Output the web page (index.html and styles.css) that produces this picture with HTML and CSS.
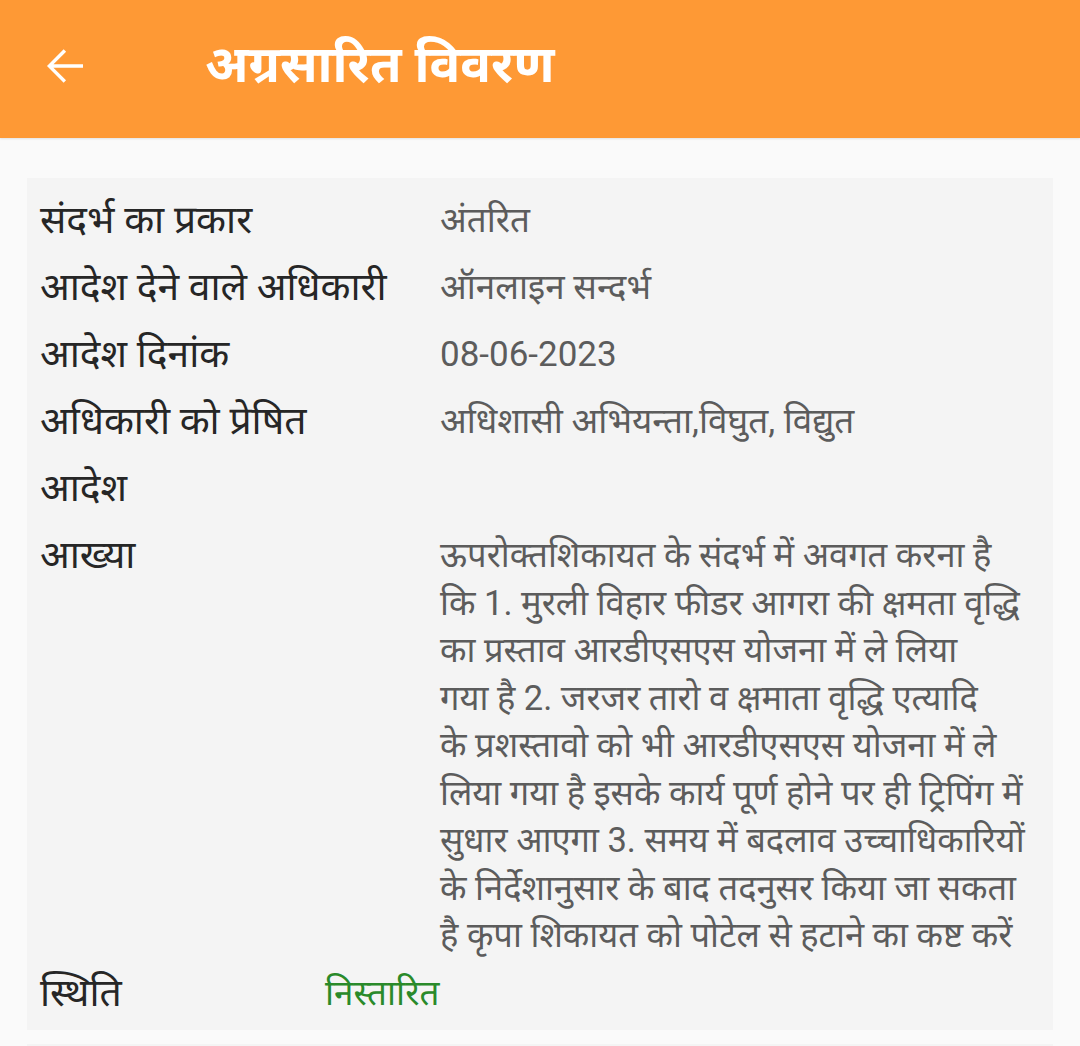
FILE: index.html
```html
<!DOCTYPE html>
<html lang="hi">
<head>
<meta charset="utf-8">
<link rel="stylesheet" href="styles.css">
</head>
<body>
<header class="appbar">
  <svg class="back" width="54" height="54" viewBox="0 0 24 24"><path d="M20 11.25H6.9l5.6-5.6L11.4 4.6 4 12l7.4 7.4 1.06-1.06-5.6-5.6H20z" fill="#fff"/></svg>
  <h1 class="title">अग्रसारित विवरण</h1>
</header>
<main class="content">
  <section class="card">
    <div class="row"><div class="label">संदर्भ का प्रकार</div><div class="value">अंतरित</div></div>
    <div class="row"><div class="label">आदेश देने वाले अधिकारी</div><div class="value">ऑनलाइन सन्दर्भ</div></div>
    <div class="row"><div class="label">आदेश दिनांक</div><div class="value">08-06-2023</div></div>
    <div class="row"><div class="label">अधिकारी को प्रेषित</div><div class="value">अधिशासी अभियन्ता,विघुत, विद्युत</div></div>
    <div class="row"><div class="label">आदेश</div><div class="value"></div></div>
    <div class="row"><div class="label">आख्या</div><div class="value para"><span class="ln">ऊपरोक्तशिकायत के संदर्भ में अवगत करना है</span> <span class="ln">कि 1. मुरली विहार फीडर आगरा की क्षमता वृद्धि</span> <span class="ln">का प्रस्ताव आरडीएसएस योजना में ले लिया</span> <span class="ln">गया है 2. जरजर तारो व क्षमाता वृद्धि एत्यादि</span> <span class="ln">के प्रशस्तावो को भी आरडीएसएस योजना में ले</span> <span class="ln">लिया गया है इसके कार्य पूर्ण होने पर ही ट्रिपिंग में</span> <span class="ln">सुधार आएगा 3. समय में बदलाव उच्चाधिकारियों</span> <span class="ln">के निर्देशानुसार के बाद तदनुसर किया जा सकता</span> <span class="ln">है कृपा शिकायत को पोटेल से हटाने का कष्ट करें</span></div></div>
    <div class="row status"><div class="label">स्थिति</div><div class="value ok">निस्तारित</div></div>
  </section>
  <section class="card next"></section>
</main>
</body>
</html>
```
FILE: styles.css
```css
html, body { margin: 0; padding: 0; }
body {
  background: #fafafa;
  font-family: Roboto, "Noto Sans Devanagari", "Noto Sans", sans-serif;
  width: 1080px;
  height: 1046px;
  overflow: hidden;
}
.appbar {
  height: 138px;
  background: #fe9935;
  display: flex;
  align-items: center;
  box-shadow: 0 1px 2px rgba(0,0,0,0.10);
}
.back { margin-left: 38px; margin-top: -6px; flex: none; }
.title {
  margin: 0 0 0 113px;
  color: #fff;
  font-size: 51px;
  font-weight: 700;
}
.content { padding: 40px 27px 0; }
.card {
  background: #f4f4f4;
  padding: 9px 13px 3px;
}
.row { display: flex; min-height: 67px; }
.label {
  width: 400px;
  flex: none;
  color: #262626;
  font-size: 39px;
  line-height: 67px;
}
.value {
  flex: 1;
  min-width: 0;
  color: #5c5c5c;
  font-size: 35px;
  line-height: 67px;
}
.para { line-height: 47.5px; padding-top: 10px; font-size: 34.5px; }
.ln { display: block; white-space: nowrap; }
.status .label { width: 285px; }
.ok { color: #2a8a2a; }
.next { margin-top: 14px; height: 40px; padding: 0; }
```
